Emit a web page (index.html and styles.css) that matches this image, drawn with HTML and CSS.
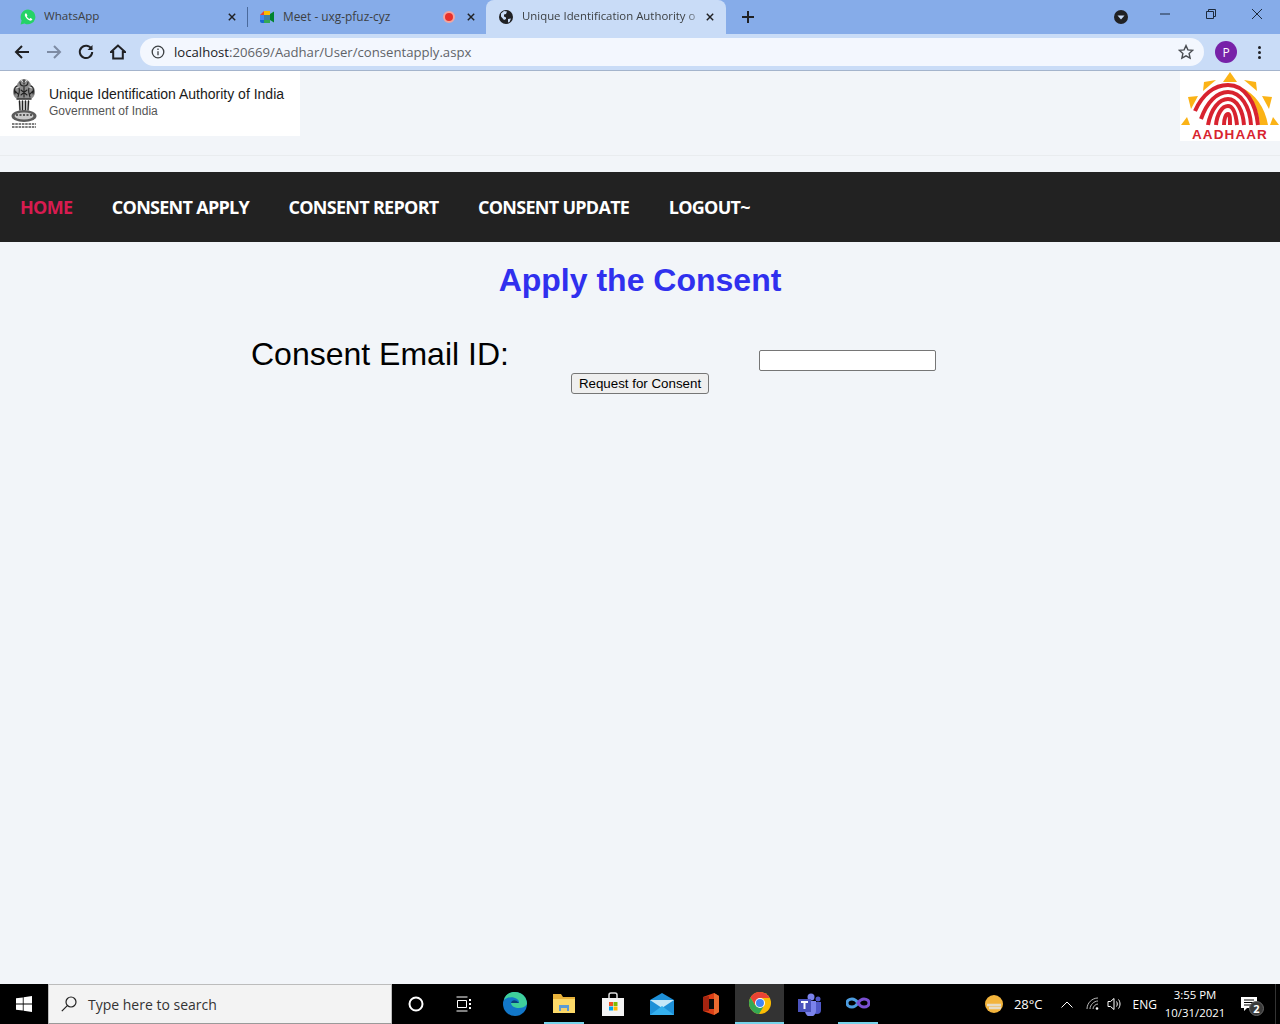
FILE: index.html
```html
<!DOCTYPE html>
<html lang="en">
<head>
    <meta charset="UTF-8">
    <meta name="viewport" content="width=device-width, initial-scale=1.0">
    <title>Apply the Consent</title>
    <link rel="stylesheet" href="styles.css">
</head>
<body>
    <div class="tabstrip">
        <div class="tab tab-first">
            <svg class="favicon" viewBox="0 0 16 16"><path d="M8 .5a7.4 7.4 0 0 0-6.4 11.1L.6 15.500l4-1A7.400 7.400 0 1 0 8 .5z" fill="#25d366"/><path d="M5.600 4.200c-.9.700-1 2 -.3 3.400 1 1.900 2.400 3.200 4.300 3.900 1.200.4 2.300 0 2.700-1 .1-.3 0-.5-.2-.6l-1.500-.8c-.2-.1-.4 0-.5.100l-.6.700c-1.200-.4-2.100-1.300-2.700-2.500l.5-.6c.1-.2.100-.3 0-.5l-.7-1.500c-.1-.3-.3-.3-.5-.3z" fill="#fff"/></svg>
            <span class="tab-title">WhatsApp</span>
            <svg class="tab-close" viewBox="0 0 10 10"><path d="M1 1l8 8M9 1l-8 8"/></svg>
        </div>
        <div class="tab-sep"></div>
        <div class="tab tab-second">
            <svg class="favicon" viewBox="0 0 16 16"><path d="M1 6l4-4v4z" fill="#ea4335"/><path d="M5 2h6v4H5z" fill="#fbbc04"/><path d="M1 6h4v5H1z" fill="#4285f4"/><path d="M1 11h4v3H3a2 2 0 0 1-2-2z" fill="#1967d2"/><path d="M5 11h6v3H5z" fill="#34a853"/><path d="M11 5l4-2.500v11L11 11z" fill="#00832d"/><path d="M5 6h6v5H5z" fill="#3f7fa8"/></svg>
            <span class="tab-title">Meet - uxg-pfuz-cyz</span>
            <span class="rec-dot"></span>
            <svg class="tab-close" viewBox="0 0 10 10"><path d="M1 1l8 8M9 1l-8 8"/></svg>
        </div>
        <div class="tab tab-active">
            <svg class="favicon" viewBox="0 0 16 16"><circle cx="8" cy="8" r="7" fill="#202124"/><path d="M3 4.500l3-2.500 3 .5-1 2.500-2 .5v2l2 1v1.500l-2 1-3-3.500zM10 10l3-.5-1.500 3.500-1.500.5z" fill="#c9dcf7"/></svg>
            <span class="tab-title tab-title-fade">Unique Identification Authority o</span>
            <svg class="tab-close" viewBox="0 0 10 10"><path d="M1 1l8 8M9 1l-8 8"/></svg>
        </div>
        <svg class="new-tab" viewBox="0 0 12 12"><path d="M6 0v12M0 6h12"/></svg>
        <div class="window-controls">
            <span class="tab-search"><svg viewBox="0 0 14 14"><circle cx="7" cy="7" r="7" fill="#202124"/><path d="M3.500 5.500h7L7 9.500z" fill="#c9dcf7"/></svg></span>
            <svg class="win-btn win-min" viewBox="0 0 10 10"><path d="M0 5h10"/></svg>
            <svg class="win-btn win-restore" viewBox="0 0 10 10"><path d="M.5 2.500h7v7h-7zM2.500 2.500v-2h7v7h-2"/></svg>
            <svg class="win-btn win-x" viewBox="0 0 10 10"><path d="M0 0l10 10M10 0L0 10"/></svg>
        </div>
    </div>

    <div class="toolbar">
        <svg class="tool-icon" viewBox="0 0 16 16"><path d="M15 8H2M8 2L2 8l6 6"/></svg>
        <svg class="tool-icon tool-off" viewBox="0 0 16 16"><path d="M1 8h13M8 2l6 6-6 6"/></svg>
        <svg class="tool-icon" viewBox="0 0 16 16"><path d="M13.500 5A6.200 6.200 0 1 0 14.200 8"/><path class="tool-fill" d="M14.500 1v5h-5z"/></svg>
        <svg class="tool-icon" viewBox="0 0 16 16"><path d="M8 1.500L1 8h2.200v6.500h9.600V8H15z"/></svg>
        <div class="omnibox">
            <svg class="info-icon" viewBox="0 0 14 14"><circle cx="7" cy="7" r="5.800"/><path d="M7 6.200v4M7 3.600v1.400"/></svg>
            <span class="url"><span class="url-host">localhost</span>:20669/Aadhar/User/consentapply.aspx</span>
            <svg class="star-icon" viewBox="0 0 16 16"><path d="M8 1.600l1.900 4.300 4.700.5-3.500 3.100 1 4.600L8 11.800l-4.100 2.300 1-4.600-3.500-3.100 4.700-.5z"/></svg>
        </div>
        <span class="avatar">P</span>
        <span class="kebab"><i></i><i></i><i></i></span>
    </div>

    <div class="page">
        <div class="page-head">
            <div class="uidai-logo">
                <svg class="emblem" viewBox="0 0 30 52">
                    <g fill="none" stroke-linecap="round">
                        <path d="M5 18c-2-4-1-9 3-11 1-4 5-6 7-6s6 2 7 6c4 2 5 7 3 11-1 2-3 3-4 3H9c-1 0-3-1-4-3z" fill="#8c8c8c"/>
                        <path d="M15 2v4M11 4c0 3 1 4 4 4s4-1 4-4M8 8c-2 1-3 4-2 8M22 8c2 1 3 4 2 8M10 10c1 3 0 6-1 9M20 10c-1 3 0 6 1 9M15 9v10M12 12l6 5M18 12l-6 5M6 13l3 3M24 13l-3 3" stroke="#222" stroke-width="1.100"/>
                        <path d="M12 2l2 2M18 2l-2 2M7 10l3-1M23 10l-3-1" stroke="#e8e8e8" stroke-width=".8"/>
                        <path d="M8 21h14" stroke="#333" stroke-width="1.500"/>
                        <path d="M9 23l1 9h10l1-9" fill="#d6d6d6"/>
                        <path d="M10.500 23l.5 9M13.500 23v9M16.500 23v9M19.500 23l-.5 9" stroke="#222" stroke-width="1.300"/>
                    </g>
                    <ellipse cx="15" cy="38" rx="12.500" ry="6" fill="#5a5a5a"/>
                    <ellipse cx="15" cy="38" rx="9.500" ry="3.500" fill="#c9c9c9"/>
                    <path d="M7 37h16" stroke="#333" stroke-width="1.400" stroke-dasharray="2 1.500"/>
                    <path d="M3 46h24M3 49h24" stroke="#555" stroke-width="1.500" stroke-dasharray="2.500 .8"/>
                </svg>
                <div class="uidai-text">
                    <div class="uidai-name">Unique Identification Authority of India</div>
                    <div class="uidai-gov">Government of India</div>
                </div>
            </div>
            <div class="aadhaar-logo">
                <svg class="aadhaar-mark" viewBox="0 0 100 57">
                    <g fill="#fbb316">
                        <path d="M50 1l7 10H43z"/>
                        <path d="M23 20l1-9 12-2z"/>
                        <path d="M77 20l-1-9-12-2z"/>
                        <path d="M8 26l10-1-7 13z"/>
                        <path d="M92 26l-10-1 7 13z"/>
                        <path d="M1 54h9l-3-8z"/>
                        <path d="M99 54h-9l3-8z"/>
                        <path d="M62 17c13 6 23 19 26 37h-8C78 37 72 25 62 17z"/>
                    </g>
                    <g fill="none" stroke="#d8232f" stroke-width="4">
                        <path d="M15 40C22 24 34 14 48 14 65 14 76 32 78 54"/>
                        <path d="M21 48C27 31 37 21 48 21 61 21 70 36 71 54"/>
                        <path d="M28 54C31 38 39 28 48 28 57 28 63 40 64 54"/>
                        <path d="M36 54C37 43 42 35 48 35 54 35 56 44 57 54"/>
                        <path d="M44 54C44 47 46 43 48 43 50 43 50 48 50 54"/>
                    </g>
                </svg>
                <div class="aadhaar-word">AADHAAR</div>
            </div>
        </div>
        <hr class="head-rule">

        <nav class="main-nav">
            <a class="nav-link nav-current" href="#">HOME</a>
            <a class="nav-link" href="#">CONSENT APPLY</a>
            <a class="nav-link" href="#">CONSENT REPORT</a>
            <a class="nav-link" href="#">CONSENT UPDATE</a>
            <a class="nav-link" href="#">LOGOUT~</a>
        </nav>

        <h2 class="page-title">Apply the Consent</h2>

        <form class="consent-form">
            <div class="consent-row">
                <label class="consent-label" for="consentEmail">Consent Email ID:</label>
                <input class="consent-input" type="text" id="consentEmail">
            </div>
            <button class="consent-btn" type="button">Request for Consent</button>
        </form>
    </div>

    <div class="taskbar">
        <span class="start-btn">
            <svg viewBox="0 0 16 16"><path d="M0 2.300l6.800-.9v6.200H0zM7.600 1.300L16 0v7.600H7.600zM0 8.400h6.800v6.200L0 13.700zM7.600 8.400H16V16l-8.400-1.200z" fill="#fff"/></svg>
        </span>
        <div class="task-search">
            <svg viewBox="0 0 16 16"><circle cx="10" cy="6" r="5"/><path d="M6.300 9.700L.8 15.200"/></svg>
            <span>Type here to search</span>
        </div>
        <div class="task-apps">
            <span class="task-app task-app-sm"><svg viewBox="0 0 16 16"><circle cx="8" cy="8" r="6.500" fill="none" stroke="#fff" stroke-width="2"/></svg></span>
            <span class="task-app task-app-sm"><svg viewBox="0 0 16 16" fill="none" stroke="#fff"><path d="M.5 1h11M.5 15h11M1.500 4.500h9v7h-9z"/><path d="M14 3v2M14 7v2M14 11v2" stroke-width="2"/></svg></span>
            <span class="task-app task-app-lg task-edge"><svg viewBox="0 0 24 24"><circle cx="12" cy="12" r="12" fill="#1277c9"/><path d="M24 12c0-7-5-12-12-12C6 0 2 3 1 8c3-3 9-4 13-1 2 1 2 3 2 4H8c0 3 4 5 8 5 3 0 6-1 8-4z" fill="#3fcf9b"/><path d="M8 11c1-3 4-4 8 0z" fill="#0a3f7a"/></svg></span>
            <span class="task-app task-app-lg task-open"><svg viewBox="0 0 24 24"><path d="M1 3h8l2 3h12v16H1z" fill="#e8b23a"/><path d="M1 8h22v14H1z" fill="#fcd968"/><path d="M7 14h10v6H7z" fill="#5b9bd5"/><path d="M9 17h6v3H9z" fill="#f5d06a"/></svg></span>
            <span class="task-app task-app-lg"><svg viewBox="0 0 24 24"><path d="M8 6V3a2 2 0 0 1 2-2h4a2 2 0 0 1 2 2v3" fill="none" stroke="#ddd" stroke-width="1.500"/><path d="M1 6h22v18H1z" fill="#f4f4f4"/><path d="M8 10h4v4H8z" fill="#f25022"/><path d="M12.500 10h4v4h-4z" fill="#7fba00"/><path d="M8 14.500h4v4H8z" fill="#00a4ef"/><path d="M12.500 14.500h4v4h-4z" fill="#ffb900"/></svg></span>
            <span class="task-app task-app-lg"><svg viewBox="0 0 24 24"><path d="M0 8l12-7 12 7v15H0z" fill="#1e90d8"/><path d="M0 8h24l-12 8z" fill="#c6e7f8"/><path d="M0 23l12-9 12 9z" fill="#35b0ee"/></svg></span>
            <span class="task-app task-app-lg"><svg viewBox="0 0 24 24"><path d="M4 5l11-4 5 3v16l-5 3-11-4z" fill="#dc3e15"/><path d="M15 1l5 3v16l-5 3z" fill="#eb6b30"/><path d="M4 19V5l6-1v15z" fill="#a32410"/><path d="M10 7h5v10h-5z" fill="#0a0a0a"/></svg></span>
            <span class="task-app task-app-lg task-chrome"><svg viewBox="0 0 24 24"><circle cx="12" cy="12" r="11" fill="#fbbc04"/><path d="M12 1a11 11 0 0 0-9.500 5.500L7 14l5-7h9.500A11 11 0 0 0 12 1z" fill="#ea4335"/><path d="M2.500 6.500A11 11 0 0 0 11 23l4.500-7.500L7 14z" fill="#34a853"/><circle cx="12" cy="12" r="5" fill="#fff"/><circle cx="12" cy="12" r="4" fill="#4285f4"/></svg></span>
            <span class="task-app task-app-lg"><svg viewBox="0 0 24 24"><circle cx="14" cy="5" r="3.500" fill="#7b83eb"/><circle cx="21" cy="7" r="2.500" fill="#5059c9"/><path d="M16 10h8v8a4 4 0 0 1-8 0z" fill="#5059c9"/><path d="M8 9h11v10a5 5 0 0 1-11 0z" fill="#7b83eb"/><path d="M1 7h13v13H1z" fill="#4b53bc"/><path d="M4 10h7M7.500 10v7" stroke="#fff" stroke-width="2"/></svg></span>
            <span class="task-app task-app-lg task-open"><svg viewBox="0 0 24 24" fill="none" stroke-width="3"><path d="M12 12c-2-3-4-4-6-4-3 0-5 2-5 4s2 4 5 4c2 0 4-1 6-4z" stroke="#4d9de0"/><path d="M12 12c2-3 4-4 6-4 3 0 5 2 5 4s-2 4-5 4c-2 0-4-1-6-4z" stroke="#7a4fd0"/></svg></span>
        </div>
        <div class="tray">
            <svg class="tray-weather" viewBox="0 0 20 20"><circle cx="10" cy="10" r="9" fill="#f3b43c"/><path d="M3 11h14M5 14h12" stroke="#e6dcc6" stroke-width="2.500"/></svg>
            <span class="tray-temp">28°C</span>
            <svg class="tray-chevron" viewBox="0 0 12 7"><path d="M.5 6.500L6 1l5.500 5.500"/></svg>
            <svg class="tray-wifi" viewBox="0 0 14 14"><path d="M1 12C1 6 6 1 12 1M4 12c0-4 4-8 8-8M7 12c0-2.500 2.500-5 5-5"/><circle cx="11" cy="11.500" r="1.300" fill="#fff" stroke="none"/></svg>
            <svg class="tray-sound" viewBox="0 0 16 14"><path d="M1 4.500h2.500L7 1.500v11l-3.500-3H1zM9.500 4.500c1 1.500 1 3.500 0 5M11.500 2.500c2 2.500 2 6.500 0 9"/></svg>
            <span class="tray-lang">ENG</span>
            <div class="tray-clock"><div>3:55 PM</div><div>10/31/2021</div></div>
            <span class="tray-note">
                <svg viewBox="0 0 16 15"><path d="M0 0h16v11H6l-3 3v-3H0z" fill="#fff"/><path d="M3 3h10M3 5.500h10M3 8h10" stroke="#000"/></svg>
                <b class="note-count">2</b>
            </span>
            <span class="show-desktop"></span>
        </div>
    </div>
</body>
</html>
```

FILE: styles.css
```css
html, body {
    margin: 0;
    height: 100%;
}

body {
    width: 1280px;
    height: 1024px;
    overflow: hidden;
    display: flex;
    flex-direction: column;
    font-family: "Liberation Sans", sans-serif;
    background-color: #f2f5f9;
}

/* browser tab row */
.tabstrip {
    height: 34px;
    flex: none;
    display: flex;
    align-items: center;
    background-color: #86ace9;
    font-family: "Open Sans", sans-serif;
    font-size: 11.600px;
    color: #3c4043;
}

.tab {
    height: 34px;
    display: flex;
    align-items: center;
    box-sizing: border-box;
}

.tab-first {
    width: 247px;
    padding: 0 11px 0 20px;
}

.tab-sep {
    width: 1px;
    height: 20px;
    background-color: #4a6a9c;
}

.tab-second {
    width: 238px;
    padding: 0 11px 0 11px;
    font-size: 11.900px;
}

.tab-active {
    width: 240px;
    padding: 0 12px 0 12px;
    background-color: #c9dcf7;
    border-radius: 8px 8px 0 0;
}

.favicon {
    width: 16px;
    height: 16px;
    flex: none;
    margin-right: 8px;
}

.tab-title {
    flex: 1;
    line-height: 16px;
    margin-top: -2px;
    white-space: nowrap;
    overflow: hidden;
}

.tab-title-fade {
    font-size: 11.400px;
    -webkit-mask-image: linear-gradient(to right, #000 88%, transparent 100%);
    mask-image: linear-gradient(to right, #000 88%, transparent 100%);
}

.tab-close {
    width: 8px;
    height: 8px;
    flex: none;
    fill: none;
    stroke: #202124;
    stroke-width: 1.800;
}

.rec-dot {
    width: 8px;
    height: 8px;
    margin-right: 12px;
    border: 2px solid #f2a5a0;
    border-radius: 50%;
    background-color: #e8302a;
    flex: none;
}

.new-tab {
    width: 12px;
    height: 12px;
    margin-left: 16px;
    fill: none;
    stroke: #202124;
    stroke-width: 2;
}

.window-controls {
    margin-left: auto;
    display: flex;
    align-items: center;
    align-self: flex-start;
    height: 28px;
}

.tab-search {
    width: 14px;
    height: 14px;
    margin-right: 32px;
    margin-top: 5px;
}

.tab-search svg {
    display: block;
}

.win-btn {
    width: 10px;
    height: 10px;
    fill: none;
    stroke: #1c2a3c;
    stroke-width: 1;
}

.win-min {
    margin-right: 36px;
}

.win-restore {
    margin-right: 36px;
}

.win-x {
    margin-right: 18px;
}

/* address bar */
.toolbar {
    height: 36px;
    flex: none;
    display: flex;
    align-items: center;
    box-sizing: content-box;
    padding-left: 14px;
    background-color: #c9dcf7;
    border-bottom: 1px solid #a4b4cc;
}

.tool-icon {
    width: 16px;
    height: 16px;
    flex: none;
    margin-right: 16px;
    fill: none;
    stroke: #202124;
    stroke-width: 2;
}

.tool-off {
    stroke: #7d8ba3;
}

.tool-fill {
    fill: #202124;
    stroke: none;
}

.omnibox {
    width: 1064px;
    height: 28px;
    margin-left: -2px;
    display: flex;
    align-items: center;
    box-sizing: border-box;
    padding: 0 10px 0 11px;
    background-color: #f3f7fe;
    border-radius: 14px;
    font-family: "Open Sans", sans-serif;
    font-size: 13.150px;
    color: #5f6368;
}

.info-icon {
    width: 14px;
    height: 14px;
    margin-right: 9px;
    fill: none;
    stroke: #3c4043;
    stroke-width: 1.300;
}

.url {
    flex: 1;
}

.url-host {
    color: #202124;
}

.star-icon {
    width: 16px;
    height: 16px;
    fill: none;
    stroke: #4a4d52;
    stroke-width: 1.400;
}

.avatar {
    width: 22px;
    height: 22px;
    margin-left: 11px;
    display: flex;
    align-items: center;
    justify-content: center;
    border-radius: 50%;
    background-color: #7722a8;
    color: #fff;
    font-family: "Open Sans", sans-serif;
    font-size: 12px;
}

.kebab {
    margin-left: 21px;
    display: flex;
    flex-direction: column;
    gap: 2px;
}

.kebab i {
    width: 3px;
    height: 3px;
    border-radius: 50%;
    background-color: #202124;
}

/* page content */
.page {
    flex: 1;
    min-height: 0;
}

.page-head {
    height: 70px;
    display: flex;
    justify-content: space-between;
    align-items: flex-start;
}

.uidai-logo {
    width: 300px;
    height: 65px;
    display: flex;
    box-sizing: border-box;
    padding: 7px 0 0 9px;
    background-color: #fff;
}

.emblem {
    width: 30px;
    height: 52px;
    flex: none;
}

.uidai-text {
    margin-left: 10px;
    padding-top: 8px;
}

.uidai-name {
    font-size: 14px;
    line-height: 17px;
    color: #1a1a1a;
}

.uidai-gov {
    margin-top: 1px;
    font-size: 12px;
    line-height: 15px;
    color: #555;
}

.aadhaar-logo {
    width: 100px;
    height: 70px;
    background-color: #fff;
    text-align: center;
}

.aadhaar-mark {
    display: block;
    width: 100px;
    height: 57px;
}

.aadhaar-word {
    font-size: 13.500px;
    font-weight: bold;
    line-height: 13px;
    letter-spacing: 1.100px;
    color: #d8232f;
}

.head-rule {
    margin: 14px 0 16px;
    border: 0;
    border-top: 1px solid #e9ecef;
}

.main-nav {
    height: 70px;
    display: flex;
    align-items: center;
    gap: 39.500px;
    padding-left: 20px;
    background-color: #222;
}

.nav-link {
    font-family: "Open Sans", sans-serif;
    font-size: 18px;
    font-weight: 700;
    letter-spacing: -.72px;
    color: #fff;
    text-decoration: none;
}

.nav-current {
    color: #d81b50;
}

.page-title {
    margin: 20px 0 0;
    text-align: center;
    font-size: 32px;
    line-height: 37px;
    font-weight: bold;
    color: #3030ee;
}

.consent-form {
    margin-top: 37px;
}

.consent-row {
    display: flex;
    padding-left: 251px;
}

.consent-label {
    width: 508px;
    font-size: 32px;
    line-height: 37px;
    color: #000;
}

.consent-input {
    width: 177px;
    height: 21px;
    margin-top: 14px;
    box-sizing: border-box;
    background-color: #fff;
    border: 1px solid #767676;
    border-radius: 2px;
}

.consent-btn {
    display: block;
    width: 138px;
    height: 21px;
    margin: 0 auto;
    padding: 0;
    font-family: "Liberation Sans", sans-serif;
    font-size: 13.333px;
    color: #000;
    background-color: #efefef;
    border: 1px solid #767676;
    border-radius: 3px;
}

/* windows taskbar */
.taskbar {
    height: 40px;
    flex: none;
    display: flex;
    align-items: center;
    background-color: #000;
    font-family: "Open Sans", sans-serif;
    color: #fff;
}

.start-btn {
    width: 48px;
    display: flex;
    justify-content: center;
}

.start-btn svg {
    width: 16px;
    height: 16px;
}

.task-search {
    width: 344px;
    height: 40px;
    display: flex;
    align-items: center;
    box-sizing: border-box;
    padding-left: 12px;
    background-color: #f3f3f3;
    border: 1px solid #bcbcbc;
    border-bottom-color: #9a9a9a;
    font-size: 14px;
    color: #333;
}

.task-search svg {
    width: 16px;
    height: 16px;
    margin-right: 11px;
    fill: none;
    stroke: #222;
    stroke-width: 1.200;
}

.task-apps {
    display: flex;
    height: 40px;
}

.task-app {
    width: 49px;
    height: 40px;
    display: flex;
    align-items: center;
    justify-content: center;
    box-sizing: border-box;
}

.task-app-sm {
    width: 48px;
}

.task-app svg {
    width: 16px;
    height: 16px;
}

.task-app-lg svg {
    width: 24px;
    height: 24px;
}

.task-edge {
    margin-left: 2px;
}

.task-open {
    width: 40px;
    margin: 0 4.500px;
    border-bottom: 2px solid #76d3ea;
}

.task-chrome {
    background-color: #333;
    border-bottom: 2px solid #76d3ea;
}

.tray {
    margin-left: auto;
    display: flex;
    align-items: center;
    height: 40px;
    font-size: 13px;
}

.tray-weather {
    width: 20px;
    height: 20px;
}

.tray-temp {
    margin-left: 10px;
}

.tray-chevron {
    width: 12px;
    height: 7px;
    margin-left: 18px;
    fill: none;
    stroke: #fff;
}

.tray-wifi {
    width: 14px;
    height: 14px;
    margin-left: 13px;
    fill: none;
    stroke: #bbb;
}

.tray-sound {
    width: 16px;
    height: 14px;
    margin-left: 7px;
    fill: none;
    stroke: #fff;
}

.tray-lang {
    margin-left: 10px;
    font-size: 12px;
}

.tray-clock {
    margin-left: 7px;
    width: 62px;
    text-align: center;
    font-size: 11.400px;
    line-height: 18px;
}

.tray-note {
    position: relative;
    width: 18px;
    height: 15px;
    margin-left: 15px;
}

.tray-note svg {
    display: block;
    width: 16px;
    height: 15px;
}

.note-count {
    position: absolute;
    left: 8px;
    top: 4px;
    width: 15px;
    height: 15px;
    border-radius: 50%;
    background-color: #3a3a3a;
    border: 1px solid #666;
    box-sizing: border-box;
    font-size: 11px;
    line-height: 13px;
    text-align: center;
}

.show-desktop {
    width: 1px;
    height: 40px;
    margin-left: 16px;
    margin-right: 4px;
    background-color: #333;
}
```
